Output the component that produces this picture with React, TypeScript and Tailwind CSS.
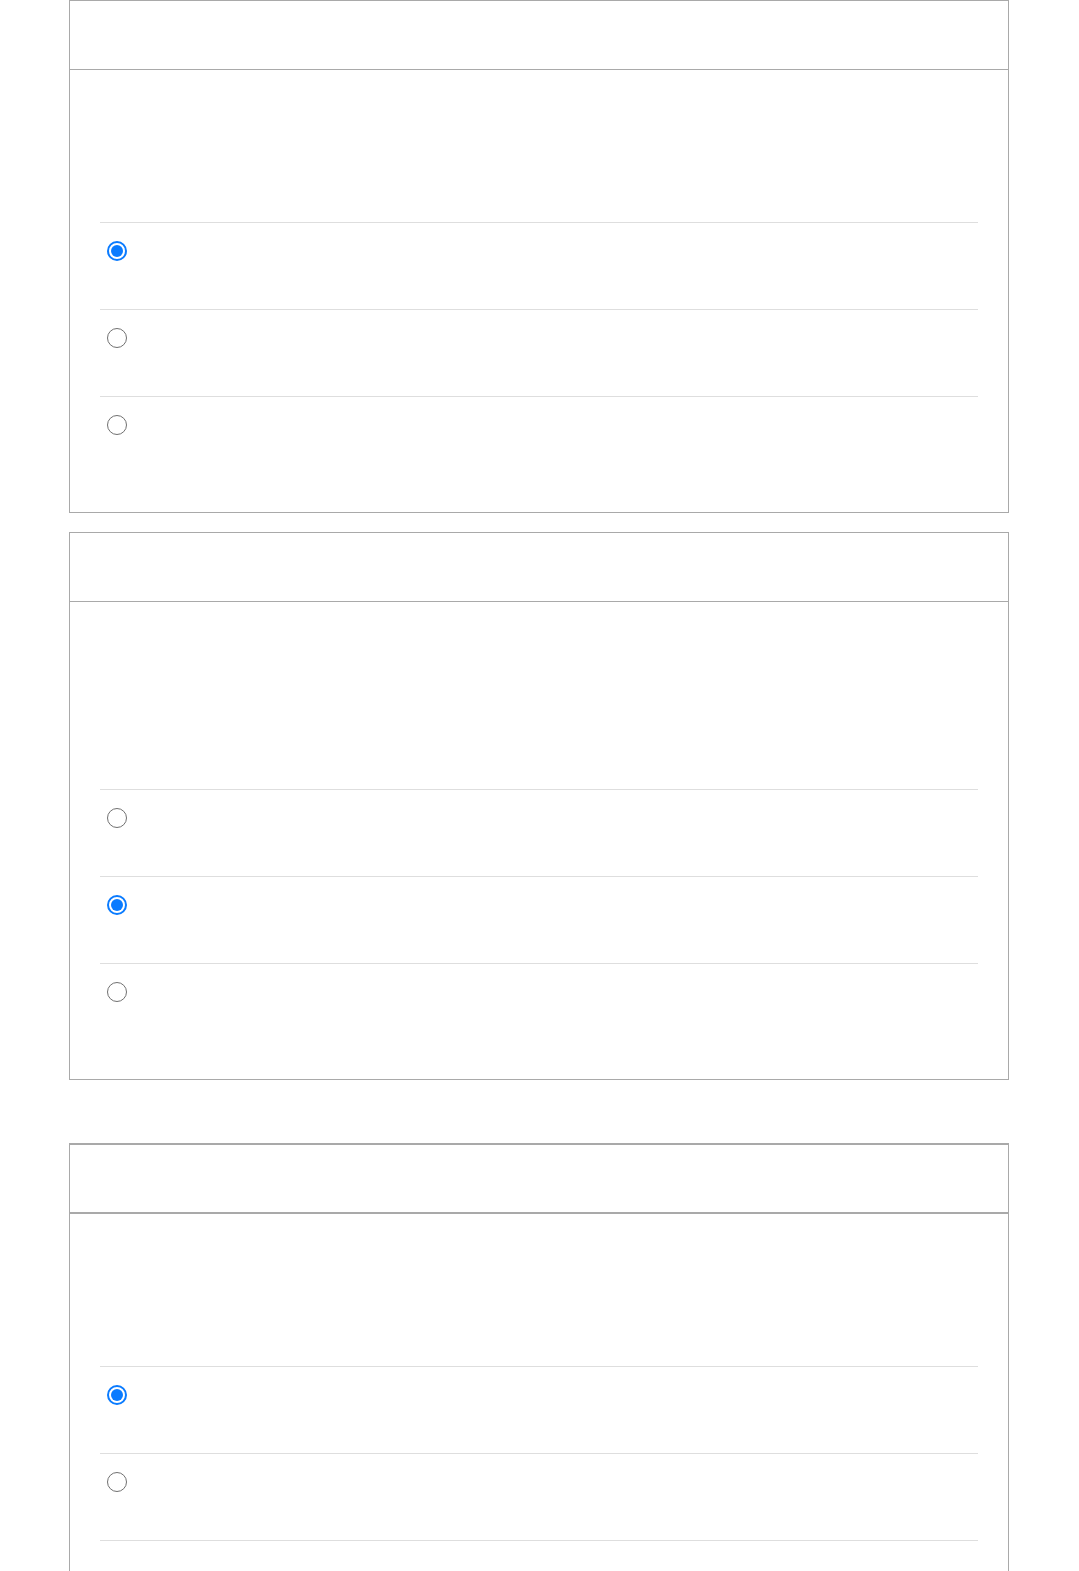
import { useState } from 'react'

type Group = {
  id: string
  intro: string
  options: string[]
  selected: number
  emphasis?: boolean
  trailing?: boolean
}

const groups: Group[] = [
  { id: 'g1', intro: 'h-[152px]', options: ['a', 'b', 'c'], selected: 0 },
  { id: 'g2', intro: 'h-[187px]', options: ['a', 'b', 'c'], selected: 1 },
  { id: 'g3', intro: 'h-[152px]', options: ['a', 'b'], selected: 0, emphasis: true, trailing: true },
]

function Radio({ checked }: { checked: boolean }) {
  return checked ? (
    <span className="flex size-5 shrink-0 items-center justify-center rounded-full border-2 border-[#0a7bff] bg-white">
      <span className="size-[12px] rounded-full bg-[#0a7bff]" />
    </span>
  ) : (
    <span className="size-5 shrink-0 rounded-full border-[1.5px] border-[#707070] bg-white" />
  )
}

function Card({ group }: { group: Group }) {
  const [selected, setSelected] = useState(group.selected)
  const line = group.emphasis ? 'border-t-2' : 'border-t'

  return (
    <section className={`w-[940px] border-x border-b border-[#a9a9a9] bg-white ${line}`}>
      <div className={`h-[69px] ${group.emphasis ? 'border-b-2' : 'border-b'} border-[#a9a9a9]`} />
      <div className="px-[30px] pb-[29px]">
        <div className={group.intro} />
        {group.options.map((opt, i) => (
          <button
            key={opt}
            type="button"
            onClick={() => setSelected(i)}
            className="flex h-[87px] w-full items-start border-t border-[#dedede] pt-[18px] pl-[7px] text-left"
          >
            <Radio checked={selected === i} />
          </button>
        ))}
        {group.trailing ? <div className="h-[87px] border-t border-[#dedede]" /> : null}
      </div>
    </section>
  )
}

export default function App() {
  return (
    <div className="min-h-screen bg-white pl-[69px] font-['Liberation_Sans',sans-serif]">
      <div className="flex flex-col gap-[19px]">
        <Card group={groups[0]} />
        <Card group={groups[1]} />
      </div>
      <div className="mt-[63px]">
        <Card group={groups[2]} />
      </div>
    </div>
  )
}
